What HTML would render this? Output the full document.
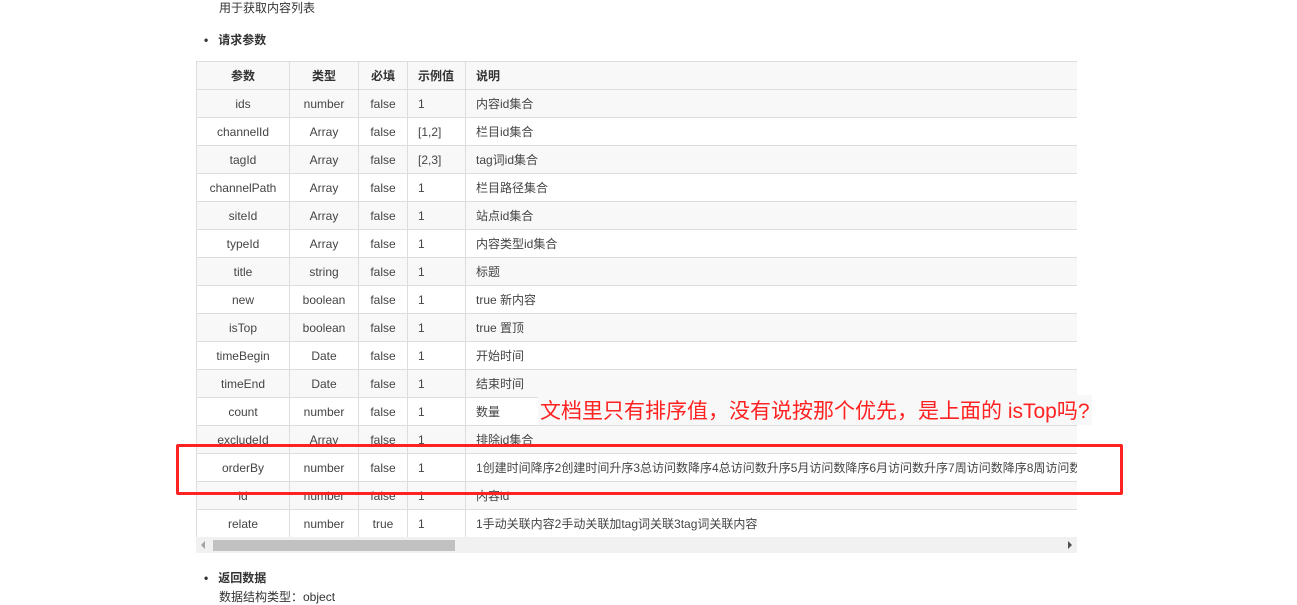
<!DOCTYPE html>
<html><head><meta charset="utf-8"><style>
body{margin:0;width:1297px;height:597px;background:#fff;overflow:hidden;font-family:"Liberation Sans","Noto Sans CJK SC",sans-serif;color:#333;position:relative}
.a{position:absolute;font-size:12px;white-space:nowrap}
.wrap{position:absolute;left:196px;top:61px;width:881px;height:492px;overflow:hidden}
table{border-collapse:collapse;font-size:12px;white-space:nowrap;table-layout:fixed;width:1200px;color:#444}
td,th{border:1px solid #ddd;height:28px;padding:0 10px;box-sizing:border-box;overflow:hidden}
th{font-weight:bold;background:#f8f8f8;color:#333}
tr:nth-child(even) td{background:#f8f8f8}
td.c{text-align:center}
.sb{position:absolute;left:0;top:476px;width:881px;height:16px;background:#f1f1f1}
.th{position:absolute;left:17px;top:3px;width:242px;height:11px;background:#c1c1c1}
</style></head><body>
<div class="a" style="left:219px;top:-1px">用于获取内容列表</div>
<div class="a" style="left:204px;top:31px;font-weight:bold">•&nbsp;&nbsp;&nbsp;请求参数</div>
<div class="wrap">
<table>
<colgroup><col style="width:93px"><col style="width:69px"><col style="width:49px"><col style="width:58px"><col style="width:931px"></colgroup>
<tr><th>参数</th><th>类型</th><th>必填</th><th style="text-align:left">示例值</th><th style="text-align:left">说明</th></tr>
<tr><td class="c">ids</td><td class="c">number</td><td class="c">false</td><td>1</td><td>内容id集合</td></tr>
<tr><td class="c">channelId</td><td class="c">Array</td><td class="c">false</td><td>[1,2]</td><td>栏目id集合</td></tr>
<tr><td class="c">tagId</td><td class="c">Array</td><td class="c">false</td><td>[2,3]</td><td>tag词id集合</td></tr>
<tr><td class="c">channelPath</td><td class="c">Array</td><td class="c">false</td><td>1</td><td>栏目路径集合</td></tr>
<tr><td class="c">siteId</td><td class="c">Array</td><td class="c">false</td><td>1</td><td>站点id集合</td></tr>
<tr><td class="c">typeId</td><td class="c">Array</td><td class="c">false</td><td>1</td><td>内容类型id集合</td></tr>
<tr><td class="c">title</td><td class="c">string</td><td class="c">false</td><td>1</td><td>标题</td></tr>
<tr><td class="c">new</td><td class="c">boolean</td><td class="c">false</td><td>1</td><td>true 新内容</td></tr>
<tr><td class="c">isTop</td><td class="c">boolean</td><td class="c">false</td><td>1</td><td>true 置顶</td></tr>
<tr><td class="c">timeBegin</td><td class="c">Date</td><td class="c">false</td><td>1</td><td>开始时间</td></tr>
<tr><td class="c">timeEnd</td><td class="c">Date</td><td class="c">false</td><td>1</td><td>结束时间</td></tr>
<tr><td class="c">count</td><td class="c">number</td><td class="c">false</td><td>1</td><td>数量</td></tr>
<tr><td class="c">excludeId</td><td class="c">Array</td><td class="c">false</td><td>1</td><td>排除id集合</td></tr>
<tr><td class="c">orderBy</td><td class="c">number</td><td class="c">false</td><td>1</td><td>1创建时间降序2创建时间升序3总访问数降序4总访问数升序5月访问数降序6月访问数升序7周访问数降序8周访问数升序</td></tr>
<tr><td class="c">id</td><td class="c">number</td><td class="c">false</td><td>1</td><td>内容id</td></tr>
<tr><td class="c">relate</td><td class="c">number</td><td class="c">true</td><td>1</td><td>1手动关联内容2手动关联加tag词关联3tag词关联内容</td></tr>
</table>
<div class="sb"><div class="th"></div>
<div style="position:absolute;left:5px;top:4px;width:0;height:0;border:4px solid transparent;border-right-color:#a3a3a3;border-left:0"></div>
<div style="position:absolute;right:5px;top:4px;width:0;height:0;border:4px solid transparent;border-left-color:#505050;border-right:0"></div>
</div>
</div>
<div class="a" style="left:538px;top:395px;font-size:21px;color:#f22;background:#f8f8f8;padding:0 2px">文档里只有排序值，没有说按那个优先，是上面的 isTop吗?</div>
<div style="position:absolute;left:176px;top:444px;width:941px;height:45px;border:3px solid #f22;border-radius:2px"></div>
<div class="a" style="left:204px;top:569px;font-weight:bold">•&nbsp;&nbsp;&nbsp;返回数据</div>
<div class="a" style="left:219px;top:588px">数据结构类型：object</div>
</body></html>
